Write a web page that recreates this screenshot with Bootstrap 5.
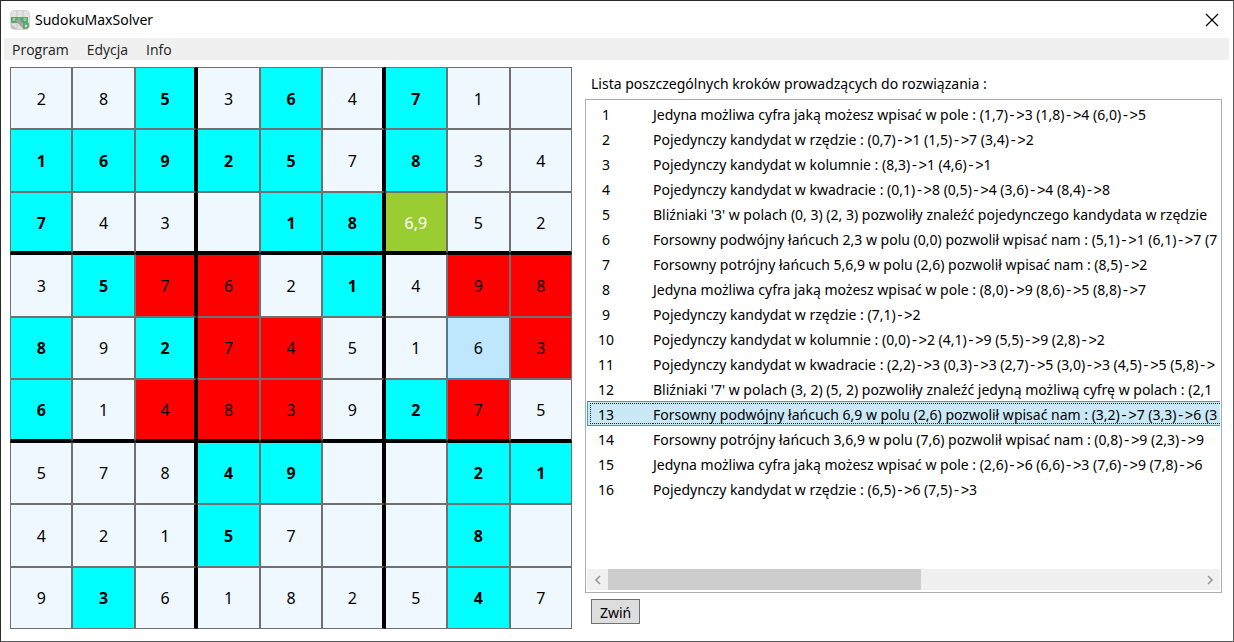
<!DOCTYPE html>
<html lang="pl">
<head>
<meta charset="utf-8">
<meta name="viewport" content="width=device-width, initial-scale=1">
<title>SudokuMaxSolver</title>
<link href="https://cdn.jsdelivr.net/npm/bootstrap@5.3.0/dist/css/bootstrap.min.css" rel="stylesheet">
<style>
  body { font-family: "Noto Sans", "Open Sans", sans-serif; font-size: 14px; line-height: 20px; color: #000; background: #fff; }
  .app-window { border: 1px solid #2b2b2b; border-right-color: #5a5a5a; border-bottom-color: #5a5a5a; }
  .title-bar { height: 37px; padding: 0 14px 0 9px; gap: 5px; }
  .menu-bar { background: #f0f0f0; height: 22px; margin: 0 4px 0 3px; padding: 1px 8px 0; gap: 18px; font-family: "Open Sans", "Noto Sans", sans-serif; }
  .menu-bar a { color: #212121; text-decoration: none; }
  .close-btn { border: 0; background: none; padding: 0; line-height: 0; }
  .workspace { padding: 7px 11px 12px 9px; gap: 13px; min-height: 0; }
  .board { display: grid; grid-template: repeat(9, minmax(0, 1fr)) / repeat(9, minmax(0, 1fr)); height: 100%; aspect-ratio: 1; }
  .cell { border: 1px solid #707070; background: #f0f8ff; color: #000; padding: 1px 0 0; font-size: 16px; line-height: 20px; border-radius: 0; }
  .cell.given { background: #0ff; font-weight: 700; }
  .cell.changed { background: #f00; }
  .cell.source { background: #9acd32; color: #fff; }
  .cell.hovered { background: #bee6fd; border-color: #3c7fb1; }
  .cell:nth-child(9n+3), .cell:nth-child(9n+6) { border-right: 3px solid #000; }
  .cell:nth-child(9n+4), .cell:nth-child(9n+7) { border-left-color: #000; }
  .cell:nth-child(n+19):nth-child(-n+27), .cell:nth-child(n+46):nth-child(-n+54) { border-bottom: 3px solid #000; }
  .cell:nth-child(n+28):nth-child(-n+36), .cell:nth-child(n+55):nth-child(-n+63) { border-top-color: #000; }
  .steps-panel { min-width: 0; padding-bottom: 5px; }
  .steps-title { margin: 0; padding: 7px 6px 5px; font-size: 14px; line-height: 20px; font-weight: 400; }
  .step-list { border: 1px solid #abadb3; padding: 1px; }
  .steps { border-collapse: separate; border-spacing: 0; min-width: 100%; white-space: nowrap; cursor: default; }
  .steps td { height: 25px; padding: 2px 0 0; vertical-align: middle; }
  .steps td:first-child { width: 66px; min-width: 66px; }
  .steps i { font: 14px/1px "Liberation Mono", monospace; }
  .step-no { display: block; width: 38px; text-align: center; }
  .steps .selected td { background: #cbe8f6; border: solid #26a0da; border-width: 1px 0; padding: 0; }
  .steps .selected td:first-child { border-left-width: 1px; }
  .steps .selected td > span { display: block; border: dotted #222; border-width: 1px 0; margin: 1px 0; padding-top: 2px; line-height: 17px; }
  .steps .selected td:first-child > span { width: auto; margin-left: 2px; border-left-width: 1px; padding-right: 32px; }
  .scroll-bar { height: 21px; margin-bottom: 1px; background: #f0f0f0; }
  .scroll-bar button { width: 21px; border: 0; padding: 0; background: none; line-height: 0; }
  .scroll-thumb { background: #cdcdcd; width: 53%; }
  .collapse-btn { border: 1px solid #707070; background: #ddd; border-radius: 0; padding: 2px 8px 0; color: #000; font-size: 14px; line-height: 21px; margin: 6px 0 0 6px; }
</style>
</head>
<body>
<div class="app-window vh-100 d-flex flex-column overflow-hidden">
  <header class="title-bar d-flex align-items-center">
    <svg width="20" height="20" viewBox="0 0 20 20" aria-hidden="true">
      <rect x=".5" y=".5" width="19" height="19" rx="4" fill="#e2e3e2" stroke="#d6d6d6"/>
      <path d="M7 1v18M13 1v18M1 13h18" stroke="#c6c8c6" fill="none"/>
      <path d="M1 7h17v6H1z" fill="#5da56b"/>
      <path d="M3 8.500h2v1H3v1h2M9 8v3M14 8.500h2v2h-2z" stroke="#a5d0ad" fill="none"/>
      <path d="M7 10l7 7" stroke="#a4a8a4" stroke-width="3.500"/>
      <path d="M13 13h6v4l-2 2h-4z" fill="#6aa877"/>
      <path d="M15 15h2v2h-2z" fill="#d5e5d8"/>
      <path d="M1 14l7 5H4q-3 0-3-3z" fill="#c3c5c3"/>
    </svg>
    <span class="me-auto">SudokuMaxSolver</span>
    <button class="close-btn" type="button" aria-label="Zamknij">
      <svg width="14" height="14" viewBox="0 0 14 14"><path d="M1 1l12 12M13 1L1 13" stroke="#000" stroke-width="1.200" fill="none"/></svg>
    </button>
  </header>
  <nav class="menu-bar d-flex align-items-center">
    <a href="#">Program</a><a href="#">Edycja</a><a href="#">Info</a>
  </nav>
  <main class="workspace d-flex flex-grow-1">
    <div class="board flex-shrink-0" id="board"></div>
    <section class="steps-panel d-flex flex-column flex-grow-1 align-items-start">
      <h1 class="steps-title">Lista poszczególnych kroków prowadzących do rozwiązania :</h1>
      <div class="step-list d-flex flex-column flex-grow-1 w-100">
        <div class="flex-grow-1 overflow-hidden"><table class="steps"><tbody id="steps"></tbody></table></div>
        <div class="scroll-bar d-flex">
          <button type="button" aria-label="W lewo"><svg width="8" height="10" viewBox="0 0 8 10"><path d="M6 1L2 5l4 4" stroke="#999" stroke-width="1.600" fill="none"/></svg></button>
          <div class="flex-grow-1 d-flex"><div class="scroll-thumb"></div></div>
          <button type="button" aria-label="W prawo"><svg width="8" height="10" viewBox="0 0 8 10"><path d="M2 1l4 4-4 4" stroke="#999" stroke-width="1.600" fill="none"/></svg></button>
        </div>
      </div>
      <button class="collapse-btn" type="button">Zwiń</button>
    </section>
  </main>
</div>
<script src="https://cdn.jsdelivr.net/npm/bootstrap@5.3.0/dist/js/bootstrap.bundle.min.js"></script>
<script>
  // g = given digit, r = filled in by the selected step, s = source of the chain, h = hovered
  const rows = [
    '2 8 g5 3 g6 4 g7 1 -',
    'g1 g6 g9 g2 g5 7 g8 3 4',
    'g7 4 3 - g1 g8 s6,9 5 2',
    '3 g5 r7 r6 2 g1 4 r9 r8',
    'g8 9 g2 r7 r4 5 1 h6 r3',
    'g6 1 r4 r8 r3 9 g2 r7 5',
    '5 7 8 g4 g9 - - g2 g1',
    '4 2 1 g5 7 - - g8 -',
    '9 g3 6 1 8 2 5 g4 7'
  ];
  const kinds = { g: 'given', r: 'changed', s: 'source', h: 'hovered' };
  document.getElementById('board').innerHTML = rows.join(' ').split(' ').map(c =>
    `<button type="button" class="cell ${kinds[c[0]] || ''}">${c.replace(/^[grsh-]/, '')}</button>`).join('');

  const steps = [
    'Jedyna możliwa cyfra jaką możesz wpisać w pole : (1,7)->3 (1,8)->4 (6,0)->5',
    'Pojedynczy kandydat w rzędzie : (0,7)->1 (1,5)->7 (3,4)->2',
    'Pojedynczy kandydat w kolumnie : (8,3)->1 (4,6)->1',
    'Pojedynczy kandydat w kwadracie : (0,1)->8 (0,5)->4 (3,6)->4 (8,4)->8',
    "Bliźniaki '3' w polach (0, 3) (2, 3) pozwoliły znaleźć pojedynczego kandydata w rzędzie",
    'Forsowny podwójny łańcuch 2,3 w polu (0,0) pozwolił wpisać nam : (5,1)->1 (6,1)->7 (7',
    'Forsowny potrójny łańcuch 5,6,9 w polu (2,6) pozwolił wpisać nam : (8,5)->2',
    'Jedyna możliwa cyfra jaką możesz wpisać w pole : (8,0)->9 (8,6)->5 (8,8)->7',
    'Pojedynczy kandydat w rzędzie : (7,1)->2',
    'Pojedynczy kandydat w kolumnie : (0,0)->2 (4,1)->9 (5,5)->9 (2,8)->2',
    'Pojedynczy kandydat w kwadracie : (2,2)->3 (0,3)->3 (2,7)->5 (3,0)->3 (4,5)->5 (5,8)->',
    "Bliźniaki '7' w polach (3, 2) (5, 2) pozwoliły znaleźć jedyną możliwą cyfrę w polach : (2,1",
    'Forsowny podwójny łańcuch 6,9 w polu (2,6) pozwolił wpisać nam : (3,2)->7 (3,3)->6 (3',
    'Forsowny potrójny łańcuch 3,6,9 w polu (7,6) pozwolił wpisać nam : (0,8)->9 (2,3)->9',
    'Jedyna możliwa cyfra jaką możesz wpisać w pole : (2,6)->6 (6,6)->3 (7,6)->9 (7,8)->6',
    'Pojedynczy kandydat w rzędzie : (6,5)->6 (7,5)->3'
  ];
  document.getElementById('steps').innerHTML = steps.map((t, i) =>
    `<tr class="${i === 12 ? 'selected' : ''}"><td><span class="step-no">${i + 1}</span></td><td><span>${t.replace(/->/g, '<i>-&gt;</i>')}</span></td></tr>`).join('');
</script>
</body>
</html>
